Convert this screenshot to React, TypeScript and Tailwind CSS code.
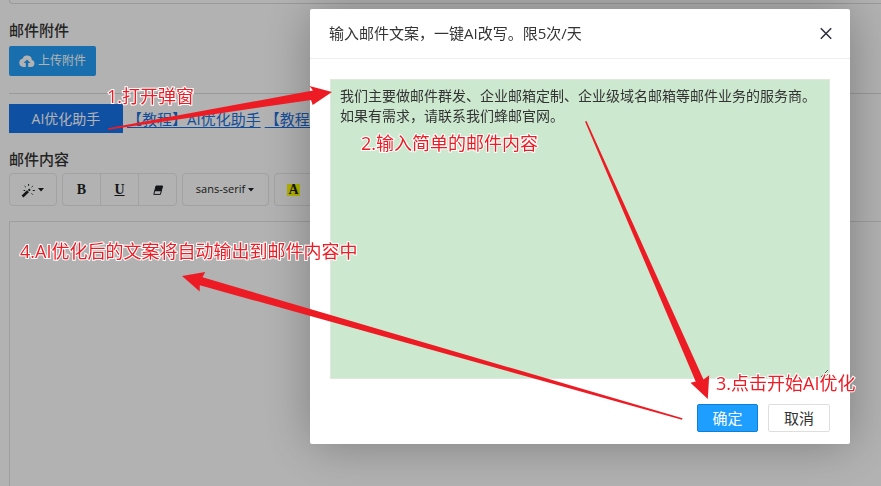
import React, { useState } from "react";

type NoteProps = {
  className: string;
  children: React.ReactNode;
};

const Note = ({ className, children }: NoteProps) => (
  <p
    className={`absolute whitespace-nowrap text-lg leading-6 text-[#ed1c24] [-webkit-text-stroke:2px_#fff] [paint-order:stroke_fill] [text-shadow:0_0_2px_rgba(255,255,255,0.6)] ${className}`}
  >
    {children}
  </p>
);

const Caret = () => (
  <svg className="h-1 w-2" viewBox="0 0 8 4" fill="currentColor" aria-hidden="true">
    <path d="M1 0h6L4 3.4z" />
  </svg>
);

const CloudUploadIcon = () => (
  <svg className="h-3 w-4" viewBox="0 0 16 12" aria-hidden="true">
    <path
      fill="currentColor"
      d="M12.9 5A4.8 4.8 0 0 0 3.6 3.7 4.2 4.2 0 0 0 4.2 12H12.4A3.6 3.6 0 0 0 12.9 5z"
    />
    <path fill="#259ffa" d="M8 4.4L11.4 8H9.2V12H6.8V8H4.6z" />
  </svg>
);

const MagicIcon = () => (
  <svg className="h-4 w-4" viewBox="0 0 16 16" fill="none" stroke="currentColor" aria-hidden="true">
    <path d="M1.5 14.5L7 9.2" strokeWidth="2.6" />
    <path d="M7.6 8.6L9 7.2" strokeWidth="2" />
    <path
      d="M3.6 4l1.2 1.2M7.6 2v1.8M11.8 4l-1.2 1.2M11.8 8.5h2M10.6 11.4l1.2 1.2M2.6 8.5h1.6"
      strokeWidth="1"
    />
  </svg>
);

const EraserIcon = () => (
  <svg className="h-3 w-3" viewBox="0 0 12 12" aria-hidden="true">
    <path d="M4 2h6.6L8.4 10.4H1.8z" fill="none" stroke="currentColor" strokeWidth="1" />
    <path d="M4 2h6.6L9.2 7.2H2.6z" fill="currentColor" />
  </svg>
);

const toolGroup =
  "flex h-[33px] shrink-0 divide-x divide-[#e8e8e8] rounded border border-[#e8e8e8] text-[#1c1f23]";
const toolButton = "flex items-center justify-center";

const MailForm = () => (
  <main className="pl-[9px] text-[#333]">
    <div className="h-1 rounded-bl border-b border-l border-[#dcdcdc]" />

    <h2 className="mt-4 text-[15px] leading-5 font-medium">邮件附件</h2>
    <button
      type="button"
      className="mt-1.5 flex h-[30px] items-center gap-[3px] rounded-xs bg-[#259ffa] px-2.5 text-xs text-white"
    >
      <CloudUploadIcon />
      上传附件
    </button>

    <hr className="mt-[17px] border-[#dcdcdc]" />

    <div className="mt-2.5 flex items-center gap-1 whitespace-nowrap">
      <button type="button" className="h-[29px] w-[114px] shrink-0 bg-[#1673ea] text-sm text-white">
        AI优化助手
      </button>
      <a href="#guide" className="text-[15px] leading-5 text-[#1a6fdc] underline underline-offset-2">
        【教程】AI优化助手
      </a>
      <a href="#video" className="text-[15px] leading-5 text-[#1a6fdc] underline underline-offset-2">
        【教程】AI优化
      </a>
    </div>

    <h2 className="mt-4 text-[15px] leading-5 font-medium">邮件内容</h2>
    <div className="mt-1 flex gap-[5px]">
      <div className={toolGroup}>
        <button type="button" aria-label="样式" className={`${toolButton} w-[46px]`}>
          <MagicIcon />
          <Caret />
        </button>
      </div>
      <div className={toolGroup}>
        <button type="button" className={`${toolButton} w-[38px] font-['Liberation_Serif',serif] text-sm font-bold`}>
          B
        </button>
        <button
          type="button"
          className={`${toolButton} w-[38px] font-['Liberation_Serif',serif] text-sm font-bold underline`}
        >
          U
        </button>
        <button type="button" aria-label="清除格式" className={`${toolButton} w-[37px]`}>
          <EraserIcon />
        </button>
      </div>
      <div className={toolGroup}>
        <button type="button" className={`${toolButton} w-[85px] gap-0.5 text-[11px]`}>
          sans-serif
          <Caret />
        </button>
      </div>
      <div className={toolGroup}>
        <button type="button" className={`${toolButton} w-[38px]`}>
          <span className="bg-[#ffff00] px-px font-['Liberation_Serif',serif] text-sm leading-3 font-bold">A</span>
        </button>
        <button type="button" aria-label="更多颜色" className={`${toolButton} w-5`}>
          <Caret />
        </button>
      </div>
    </div>
    <div className="mt-[15px] min-h-screen border-t border-l border-[#e3e3e3]" />
  </main>
);

const RewriteDialog = () => {
  const [text, setText] = useState(
    "我们主要做邮件群发、企业邮箱定制、企业级域名邮箱等邮件业务的服务商。\n如果有需求，请联系我们蜂邮官网。",
  );

  return (
    <section
      role="dialog"
      aria-labelledby="dialog-title"
      className="w-[540px] rounded-xs bg-white text-[#333] shadow-[1px_1px_50px_rgba(0,0,0,0.3)]"
    >
      <header className="flex h-[50px] items-center justify-between border-b border-[#eee] pr-[17px] pl-[19px]">
        <h1 id="dialog-title" className="text-[15px]">
          输入邮件文案，一键AI改写。限5次/天
        </h1>
        <button type="button" aria-label="关闭" className="text-[#2e2d3c]">
          <svg className="size-3.5" viewBox="0 0 14 14" fill="none" stroke="currentColor" strokeWidth="1.5">
            <path d="M1.8 1.3l10.4 10.4M12.2 1.3L1.8 11.7" />
          </svg>
        </button>
      </header>
      <div className="p-5">
        <textarea
          aria-label="邮件文案"
          className="block h-[300px] w-full resize border border-[#e0e6e0] bg-[#cce8cf] px-[9px] py-1.5 text-sm leading-5 outline-none"
          value={text}
          onChange={(e) => setText(e.target.value)}
        />
      </div>
      <footer className="flex justify-end gap-2.5 px-5 pt-[5px] pb-3">
        <button
          type="button"
          className="h-7 w-[61px] rounded-xs border border-[#0d7fd8] bg-[#1e9fff] text-[15px] leading-5 text-white"
        >
          确定
        </button>
        <button
          type="button"
          className="h-7 w-[62px] rounded-xs border border-[#dedede] bg-white text-[15px] leading-5"
        >
          取消
        </button>
      </footer>
    </section>
  );
};

const Annotations = () => (
  <div className="pointer-events-none fixed inset-0">
    <svg className="absolute top-0 left-0" width="881" height="486" viewBox="0 0 881 486" fill="#ed1c24" aria-hidden="true">
      <path d="M108 128.3L313 90.5L309.5 86L332 92L312.7 105L311 100L108 129.8z" />
      <path d="M585 121.5L695.7 381.5L690.5 382.7L707.8 399L709.2 375.2L703.5 379.5L586.5 121z" />
      <path d="M682.5 418.3L202.5 277.3L205.2 272L182 276L199.7 291.5L199.8 285.2L682 419.8z" />
    </svg>
    <Note className="top-[84px] left-[107px]">1.打开弹窗</Note>
    <Note className="top-[131px] left-[361px]">2.输入简单的邮件内容</Note>
    <Note className="top-[371px] left-[716px]">3.点击开始AI优化</Note>
    <Note className="top-[239px] left-5">4.AI优化后的文案将自动输出到邮件内容中</Note>
  </div>
);

const App = () => {
  return (
    <div className="h-screen overflow-hidden bg-white font-['Open_Sans','Noto_Sans_CJK_SC',sans-serif]">
      <MailForm />
      <div className="fixed inset-0 flex items-start justify-end bg-black/30 pt-[9px] pr-[31px]">
        <RewriteDialog />
      </div>
      <Annotations />
    </div>
  );
};

export default App;
